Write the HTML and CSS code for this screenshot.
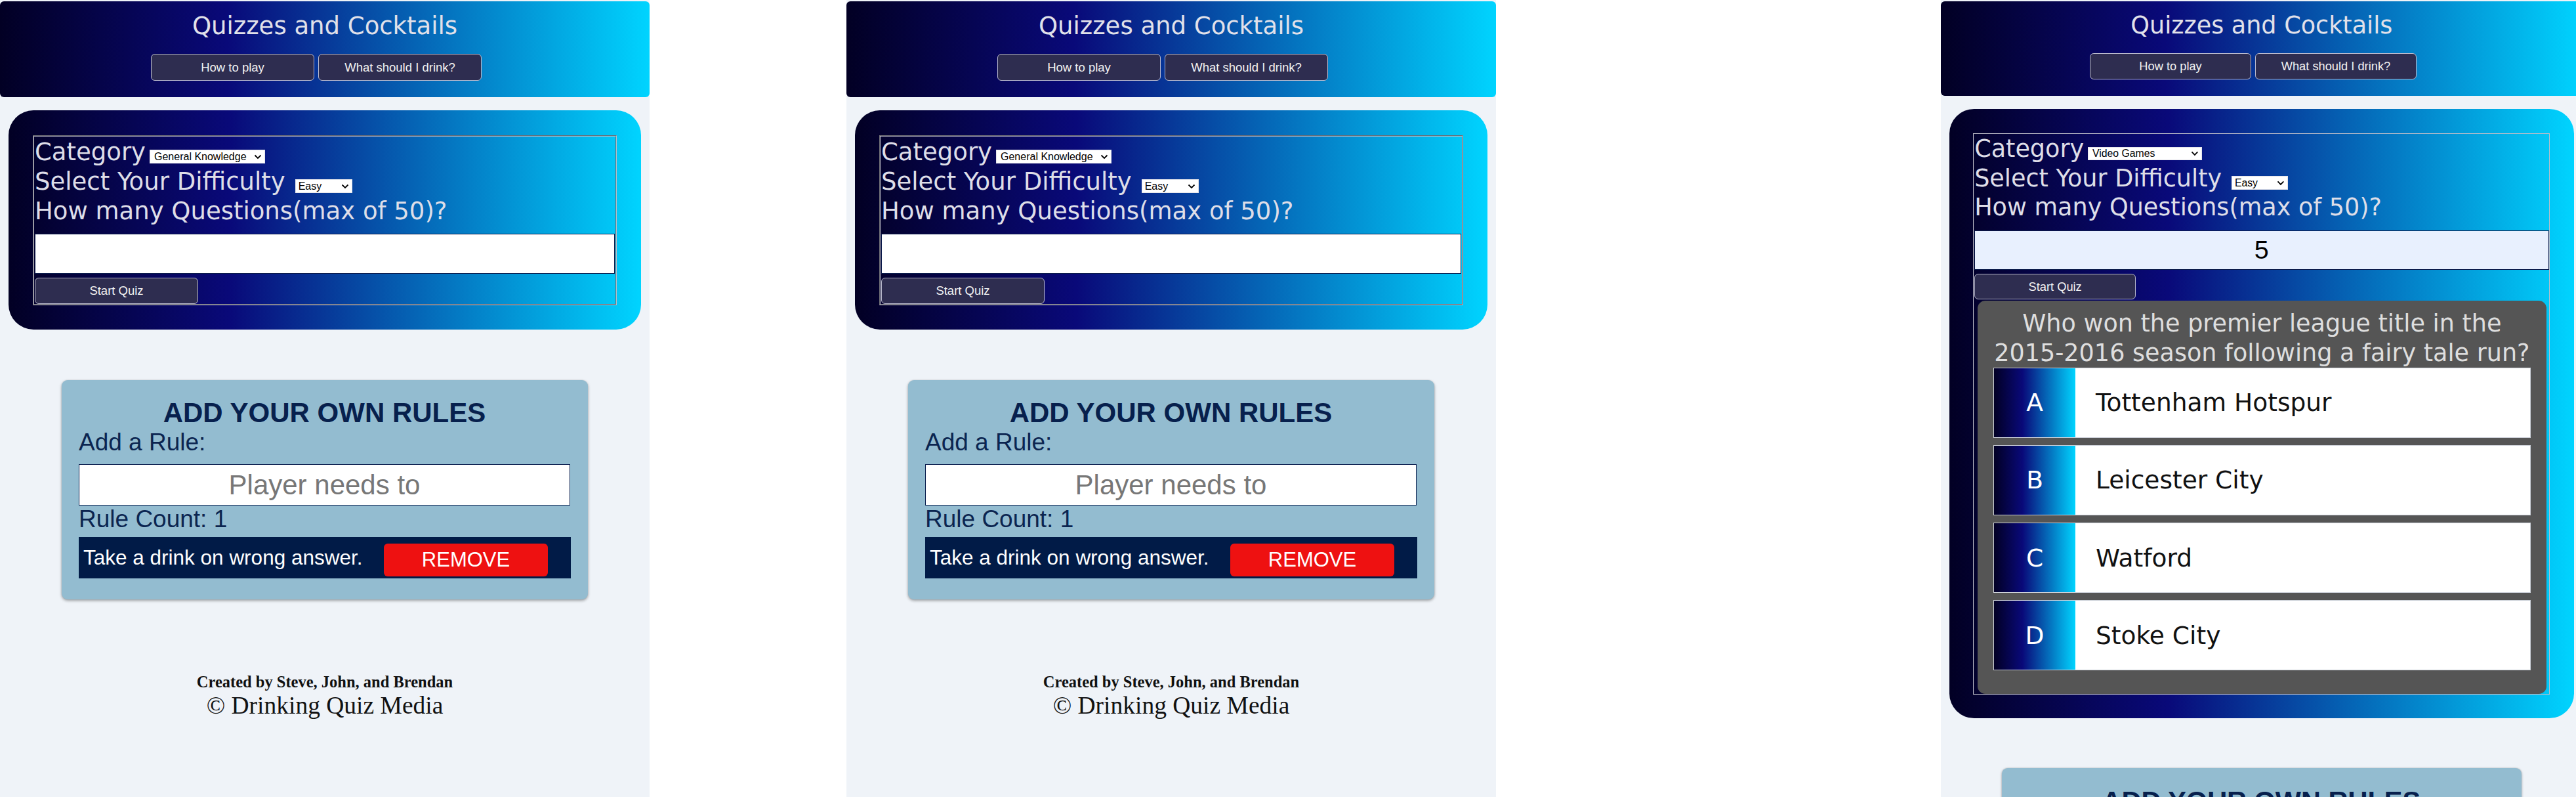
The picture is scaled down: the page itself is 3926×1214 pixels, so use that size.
FILE: index.html
```html
<!DOCTYPE html>
<html lang="en">
<head>
<meta charset="utf-8">
<title>Quizzes and Cocktails</title>
<link rel="stylesheet" href="styles.css">
</head>
<body>
<div class="board">

  <!-- Screen 1 -->
  <section class="phone">
    <header class="topbar">
      <h1 class="brand">Quizzes and Cocktails</h1>
      <nav class="topnav">
        <button class="btn" type="button">How to play</button>
        <button class="btn" type="button">What should I drink?</button>
      </nav>
    </header>
    <div class="quiz-card">
      <fieldset class="quiz-form">
        <div class="q-line">Category<span class="select select-cat"><select><option>General Knowledge</option><option>Video Games</option></select><svg class="chev" viewBox="0 0 12 8"><polyline points="1.5,1.5 6,6 10.5,1.5"/></svg></span></div>
        <div class="q-line">Select Your Difficulty<span class="select select-diff"><select><option>Easy</option><option>Medium</option><option>Hard</option></select><svg class="chev" viewBox="0 0 12 8"><polyline points="1.5,1.5 6,6 10.5,1.5"/></svg></span></div>
        <div class="q-line">How many Questions(max of 50)?</div>
        <input class="count-input" type="number" min="1" max="50">
        <button class="btn btn-start" type="button">Start Quiz</button>
      </fieldset>
    </div>
    <div class="rules-card">
      <h2 class="rules-title">ADD YOUR OWN RULES</h2>
      <label class="rules-label">Add a Rule:</label>
      <input class="rule-input" type="text" placeholder="Player needs to">
      <p class="rule-count">Rule Count: 1</p>
      <div class="rule-row">
        <span class="rule-text">Take a drink on wrong answer.</span>
        <button class="btn-remove" type="button">REMOVE</button>
      </div>
    </div>
    <footer class="credits">
      <p class="credits-by">Created by Steve, John, and Brendan</p>
      <p class="credits-copy">© Drinking Quiz Media</p>
    </footer>
  </section>

  <!-- Screen 2 -->
  <section class="phone phone-2">
    <header class="topbar">
      <h1 class="brand">Quizzes and Cocktails</h1>
      <nav class="topnav">
        <button class="btn" type="button">How to play</button>
        <button class="btn" type="button">What should I drink?</button>
      </nav>
    </header>
    <div class="quiz-card">
      <fieldset class="quiz-form">
        <div class="q-line">Category<span class="select select-cat"><select><option>General Knowledge</option><option>Video Games</option></select><svg class="chev" viewBox="0 0 12 8"><polyline points="1.5,1.5 6,6 10.5,1.5"/></svg></span></div>
        <div class="q-line">Select Your Difficulty<span class="select select-diff"><select><option>Easy</option><option>Medium</option><option>Hard</option></select><svg class="chev" viewBox="0 0 12 8"><polyline points="1.5,1.5 6,6 10.5,1.5"/></svg></span></div>
        <div class="q-line">How many Questions(max of 50)?</div>
        <input class="count-input" type="number" min="1" max="50">
        <button class="btn btn-start" type="button">Start Quiz</button>
      </fieldset>
    </div>
    <div class="rules-card">
      <h2 class="rules-title">ADD YOUR OWN RULES</h2>
      <label class="rules-label">Add a Rule:</label>
      <input class="rule-input" type="text" placeholder="Player needs to">
      <p class="rule-count">Rule Count: 1</p>
      <div class="rule-row">
        <span class="rule-text">Take a drink on wrong answer.</span>
        <button class="btn-remove" type="button">REMOVE</button>
      </div>
    </div>
    <footer class="credits">
      <p class="credits-by">Created by Steve, John, and Brendan</p>
      <p class="credits-copy">© Drinking Quiz Media</p>
    </footer>
  </section>

  <!-- Screen 3 -->
  <section class="phone phone-3">
    <header class="topbar">
      <h1 class="brand">Quizzes and Cocktails</h1>
      <nav class="topnav">
        <button class="btn" type="button">How to play</button>
        <button class="btn" type="button">What should I drink?</button>
      </nav>
    </header>
    <div class="quiz-card">
      <fieldset class="quiz-form">
        <div class="q-line">Category<span class="select select-cat"><select><option>Video Games</option><option>General Knowledge</option></select><svg class="chev" viewBox="0 0 12 8"><polyline points="1.5,1.5 6,6 10.5,1.5"/></svg></span></div>
        <div class="q-line">Select Your Difficulty<span class="select select-diff"><select><option>Easy</option><option>Medium</option><option>Hard</option></select><svg class="chev" viewBox="0 0 12 8"><polyline points="1.5,1.5 6,6 10.5,1.5"/></svg></span></div>
        <div class="q-line">How many Questions(max of 50)?</div>
        <input class="count-input count-filled" type="number" min="1" max="50" value="5">
        <button class="btn btn-start" type="button">Start Quiz</button>
        <div class="question">
          <h3 class="question-text">Who won the premier league title in the 2015-2016 season following a fairy tale run?</h3>
          <ul class="answers">
            <li class="answer"><span class="answer-key">A</span><span class="answer-text">Tottenham Hotspur</span></li>
            <li class="answer"><span class="answer-key">B</span><span class="answer-text">Leicester City</span></li>
            <li class="answer"><span class="answer-key">C</span><span class="answer-text">Watford</span></li>
            <li class="answer"><span class="answer-key">D</span><span class="answer-text">Stoke City</span></li>
          </ul>
        </div>
      </fieldset>
    </div>
    <div class="rules-card">
      <h2 class="rules-title">ADD YOUR OWN RULES</h2>
      <label class="rules-label">Add a Rule:</label>
      <input class="rule-input" type="text" placeholder="Player needs to">
      <p class="rule-count">Rule Count: 1</p>
      <div class="rule-row">
        <span class="rule-text">Take a drink on wrong answer.</span>
        <button class="btn-remove" type="button">REMOVE</button>
      </div>
    </div>
  </section>

</div>
</body>
</html>
```

FILE: styles.css
```css
* {
  box-sizing: border-box;
}

html,
body {
  margin: 0;
  padding: 0;
}

body {
  width: 3926px;
  height: 1214px;
  overflow: hidden;
  background: #ffffff;
  font-family: "Liberation Sans", Arial, sans-serif;
}

.board {
  display: flex;
  align-items: flex-start;
}

/* one phone screen */
.phone {
  flex: 0 0 990px;
  width: 990px;
  height: 1214px;
  padding-top: 2px;
  background: #eff3f8;
  overflow: hidden;
}

.phone-2 {
  margin-left: 300px;
}

/* third capture is slightly scaled down */
.phone-3 {
  zoom: 0.988;
  margin-left: 686px;
  height: 1230px;
}

/* ---------- header ---------- */
.topbar {
  padding: 15px 0 25px;
  text-align: center;
  border-radius: 6px;
  background: linear-gradient(90deg, #020024 0%, #090979 35%, #00d4ff 100%);
}

.brand {
  margin: 0;
  font-family: "DejaVu Sans", sans-serif;
  font-weight: 400;
  font-size: 37px;
  line-height: 45px;
  color: #e1e1ea;
}

.topnav {
  display: flex;
  justify-content: center;
  gap: 6px;
  margin-top: 20px;
  padding-right: 26px;
}

.btn {
  width: 249px;
  height: 41px;
  padding: 0;
  border: 1px solid #b9b9cc;
  border-radius: 6px;
  background: #2e2d50;
  color: #f2f2f2;
  font-family: "Liberation Sans", Arial, sans-serif;
  font-size: 18.5px;
}

/* ---------- quiz card ---------- */
.quiz-card {
  margin: 20px 13px 0;
  padding: 38px 37px 37px;
  border-radius: 38px;
  background: linear-gradient(90deg, #020024 0%, #090979 35%, #00d4ff 100%);
}

.quiz-form {
  margin: 0;
  min-width: 0;
  padding: 1px 1px 0;
  border: 2px groove #bdbdc8;
}

.q-line {
  font-family: "DejaVu Sans", sans-serif;
  font-size: 37px;
  line-height: 45px;
  color: #dedee8;
  white-space: nowrap;
}

.select {
  position: relative;
  display: inline-block;
  margin-left: 6px;
  font-size: 16px;
  line-height: 21px;
  vertical-align: baseline;
}

.select select {
  -webkit-appearance: none;
  appearance: none;
  height: 21px;
  margin: 0;
  padding: 0 22px 0 6px;
  border: 1px solid #e4e4ea;
  border-radius: 0;
  background: #ffffff;
  color: #000000;
  font-family: "Liberation Sans", Arial, sans-serif;
  font-size: 16px;
}

.select-cat select {
  width: 176px;
}

.select-diff {
  margin-left: 15px;
}

.select-diff select {
  width: 87px;
  padding-left: 4px;
}

.chev {
  position: absolute;
  right: 5px;
  top: 7px;
  width: 12px;
  height: 8px;
  pointer-events: none;
}

.chev polyline {
  fill: none;
  stroke: #000000;
  stroke-width: 1.8;
}

.count-input {
  display: block;
  width: 100%;
  height: 61px;
  margin: 12px 0 0;
  padding: 0;
  border: 1px solid #0b1b4b;
  background: #ffffff;
  color: #000000;
  font-family: "Liberation Sans", Arial, sans-serif;
  font-size: 40px;
  text-align: center;
  -moz-appearance: textfield;
  appearance: textfield;
}

.count-input::-webkit-inner-spin-button,
.count-input::-webkit-outer-spin-button {
  -webkit-appearance: none;
  margin: 0;
}

.count-filled {
  background: #e8f0fe;
}

.btn-start {
  display: block;
  height: 40px;
  margin-top: 6px;
}

/* ---------- question ---------- */
.question {
  margin: 2px 4px 0 5px;
  padding: 13px 10px 36px;
  border-radius: 12px;
  background: #555555;
}

.question-text {
  margin: 0;
  font-family: "DejaVu Sans", sans-serif;
  font-weight: 400;
  font-size: 37px;
  line-height: 45px;
  color: #dedede;
  text-align: center;
}

.answers {
  display: flex;
  flex-direction: column;
  gap: 11.5px;
  margin: 0 14px;
  padding: 0;
  list-style: none;
}

.answer {
  display: flex;
  height: 108px;
  border: 2px solid #cdd1d9;
  background: #ffffff;
}

.answer-key {
  flex: 0 0 126px;
  display: flex;
  align-items: center;
  justify-content: center;
  background: linear-gradient(90deg, #020024 0%, #090979 35%, #00d4ff 100%);
  color: #ffffff;
  font-family: "DejaVu Sans", sans-serif;
  font-size: 38px;
}

.answer-text {
  display: flex;
  align-items: center;
  padding-left: 31px;
  color: #111111;
  font-family: "DejaVu Sans", sans-serif;
  font-size: 38px;
}

/* ---------- rules card ---------- */
.rules-card {
  width: 802px;
  margin: 77px auto 0;
  padding: 26px 27px 32px 26px;
  border-radius: 9px;
  background: #93bcd0;
  box-shadow: 0 2px 4px rgba(0, 0, 0, 0.35), 0 0 2px rgba(0, 0, 0, 0.12);
  color: #0b2550;
  font-family: "Liberation Sans", Arial, sans-serif;
}

.rules-title {
  margin: 0;
  font-size: 42px;
  font-weight: 700;
  line-height: normal;
  text-align: center;
  color: #07204d;
}

.rules-label {
  display: block;
  font-size: 37px;
  line-height: normal;
}

.rule-input {
  display: block;
  width: 100%;
  height: 63px;
  margin: 12px 0 0;
  padding: 0;
  border: 1px solid #0a1f4f;
  background: #ffffff;
  font-family: "Liberation Sans", Arial, sans-serif;
  font-size: 42px;
  text-align: center;
}

.rule-input::placeholder {
  color: #777777;
}

.rule-count {
  margin: 0;
  font-size: 37px;
  line-height: normal;
}

.rule-row {
  display: flex;
  align-items: flex-start;
  width: 750px;
  height: 63px;
  margin-top: 6px;
  background: #011b47;
}

.rule-text {
  padding: 13px 0 0 7px;
  color: #ffffff;
  font-size: 31.5px;
  line-height: normal;
  white-space: nowrap;
}

.btn-remove {
  width: 250px;
  height: 50px;
  margin: 10px 35px 0 auto;
  padding: 0;
  border: 0;
  border-radius: 6px;
  background: #ee1111;
  color: #ffffff;
  font-family: "Liberation Sans", Arial, sans-serif;
  font-size: 31px;
}

/* ---------- footer ---------- */
.credits {
  margin-top: 112px;
  text-align: center;
  color: #111111;
  font-family: "Liberation Serif", "Times New Roman", serif;
}

.credits p {
  margin: 0;
  line-height: normal;
}

.credits-by {
  font-size: 24.5px;
  font-weight: 700;
}

.credits-copy {
  font-size: 37.5px;
}
```
